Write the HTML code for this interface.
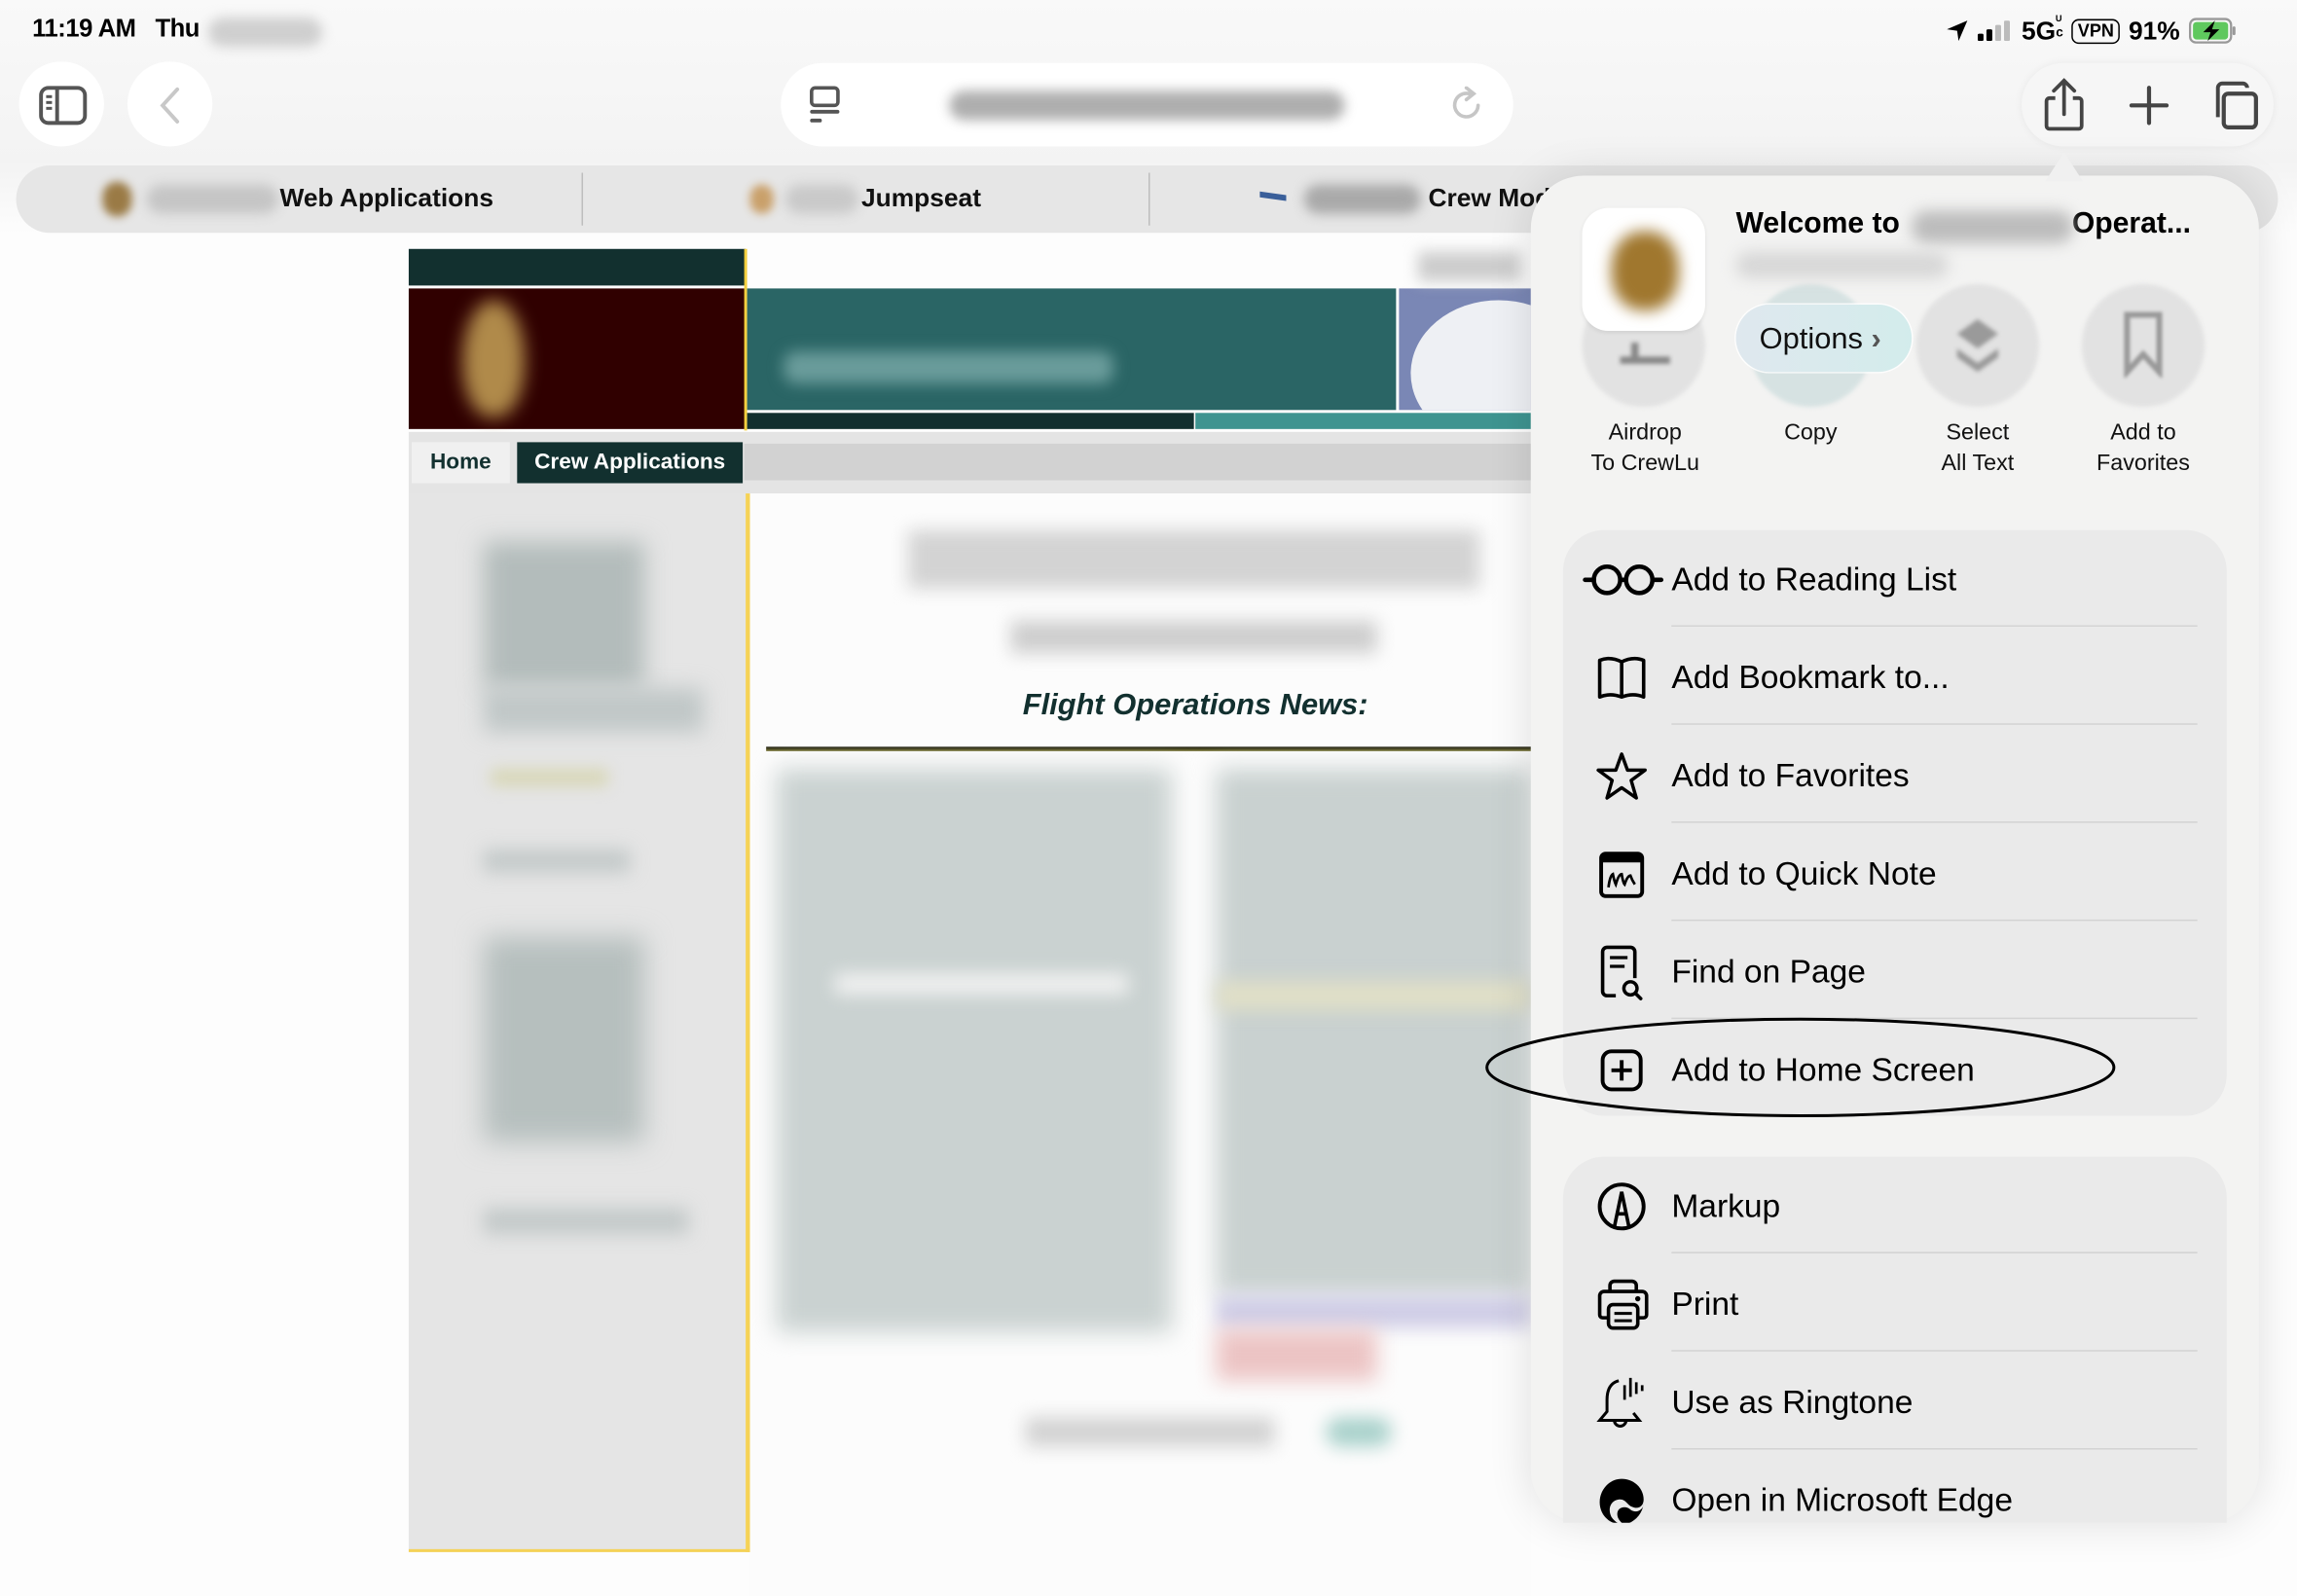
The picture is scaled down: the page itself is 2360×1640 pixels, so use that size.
<!DOCTYPE html>
<html><head><meta charset="utf-8"><style>
html,body{margin:0;padding:0;width:2360px;height:1640px;overflow:hidden;background:#fafafa}
#w{position:absolute;left:0;top:0;width:1568px;height:1090px;transform:scale(1.50510,1.50459);transform-origin:0 0;font-family:"Liberation Sans",sans-serif;color:#000;background:linear-gradient(#f9f9f9,#f3f3f3 110px,#fdfdfd 160px)}
.a{position:absolute}
.bl{filter:blur(6px)}
.row{position:absolute;left:0;right:0;height:67px}
.row .t{position:absolute;left:74px;top:50%;transform:translateY(-50%);font-size:22.3px;white-space:nowrap}
.row svg{position:absolute;left:22px;top:50%;transform:translateY(-50%)}
.sep{position:absolute;left:74px;right:20px;height:1px;background:#d3d3d3}
.circ{position:absolute;width:84px;height:84px;border-radius:50%;background:#e2e2e2;filter:blur(1.5px)}
.lbl{position:absolute;width:120px;text-align:center;font-size:15.5px;line-height:21px;color:#111}
</style></head><body><div id="w">
<div class="a" style="left:22px;top:10px;font-size:17px;font-weight:bold;letter-spacing:-0.3px">11:19 AM&nbsp;&nbsp; Thu</div>
<div class="a bl" style="left:142px;top:12px;width:78px;height:20px;background:#cfcfcf;border-radius:10px;filter:blur(4px)"></div>
<div class="a" style="left:1328px;top:10px;font-size:17.5px;font-weight:bold;white-space:nowrap;display:flex;align-items:center;gap:6px">
<svg width="16" height="16" viewBox="0 0 16 16"><path d="M15 1 L1 7 L8 8 L9 15 Z" fill="#000"/></svg>
<svg width="24" height="14" viewBox="0 0 24 14"><rect x="0" y="9" width="4" height="5" rx="1"/><rect x="6" y="6" width="4" height="8" rx="1"/><rect x="12" y="3" width="4" height="11" rx="1" fill="#bbb"/><rect x="18" y="0" width="4" height="14" rx="1" fill="#bbb"/></svg>
<span>5G<span style="font-size:9px;display:inline-block;line-height:8px;vertical-align:2px">ᵁ<br>c</span></span>
<span style="border:1.5px solid #000;border-radius:5px;font-size:12px;padding:0 3px;line-height:15px">VPN</span>
<span>91%</span>
<svg width="34" height="18" viewBox="0 0 34 18"><rect x="1" y="1" width="28" height="16" rx="4" fill="none" stroke="#999" stroke-width="1.5"/><rect x="3" y="3" width="24" height="12" rx="2.5" fill="#5fc85e"/><rect x="30" y="6" width="2" height="6" rx="1" fill="#999"/><path d="M18 2 L10 10 H15 L13 16 L21 8 H16 Z" fill="#000"/></svg>
</div>
<div class="a" style="left:13px;top:42px;width:58px;height:58px;border-radius:50%;background:#fff"></div>
<svg class="a" style="left:26px;top:58px" width="34" height="28" viewBox="0 0 34 28"><rect x="2" y="2" width="30" height="24" rx="5" fill="none" stroke="#555" stroke-width="2.6"/><line x1="13" y1="2" x2="13" y2="26" stroke="#555" stroke-width="2.6"/><g fill="#555"><rect x="5.5" y="7" width="4" height="2"/><rect x="5.5" y="11" width="4" height="2"/><rect x="5.5" y="15" width="4" height="2"/></g></svg>
<div class="a" style="left:87px;top:42px;width:58px;height:58px;border-radius:50%;background:#fff"></div>
<svg class="a" style="left:106px;top:58px" width="20" height="28" viewBox="0 0 20 28"><path d="M15 3 L5 14 L15 25" fill="none" stroke="#c8c8c8" stroke-width="2.6" stroke-linecap="round"/></svg>
<div class="a" style="left:533px;top:43px;width:500px;height:57px;border-radius:29px;background:#fff"></div>
<svg class="a" style="left:551px;top:58px" width="26" height="28" viewBox="0 0 26 28"><rect x="3" y="2" width="18" height="12" rx="2.5" fill="none" stroke="#555" stroke-width="2.4"/><rect x="2" y="17" width="20" height="2.6" rx="1.3" fill="#555"/><rect x="2" y="23" width="8" height="2.6" rx="1.3" fill="#555"/></svg>
<div class="a bl" style="left:648px;top:62px;width:270px;height:20px;background:#9a9a9a;border-radius:10px;filter:blur(4px);opacity:.8"></div>
<svg class="a" style="left:989px;top:59px" width="26" height="26" viewBox="0 0 26 26"><path d="M20 13 A8 8 0 1 1 14 5" fill="none" stroke="#c6c6c6" stroke-width="2.4" stroke-linecap="round"/><path d="M12 1 L17 5 L12 9" fill="none" stroke="#c6c6c6" stroke-width="2.4" stroke-linecap="round"/></svg>
<div class="a" style="left:1380px;top:43px;width:172px;height:57px;border-radius:29px;background:#f6f6f6;box-shadow:0 0 6px rgba(0,0,0,.06)"></div>
<svg class="a" style="left:1392px;top:52px" width="34" height="40" viewBox="0 0 34 40"><path d="M11 15 H7 a2 2 0 0 0 -2 2 V34 a2 2 0 0 0 2 2 H27 a2 2 0 0 0 2 -2 V17 a2 2 0 0 0 -2 -2 H23" fill="none" stroke="#444" stroke-width="2.5"/><path d="M17 26 V3 M10 10 L17 3 L24 10" fill="none" stroke="#444" stroke-width="2.5" stroke-linecap="round"/></svg>
<svg class="a" style="left:1453px;top:58px" width="28" height="28" viewBox="0 0 28 28"><path d="M14 2 V26 M2 14 H26" stroke="#444" stroke-width="2.8" stroke-linecap="round"/></svg>
<svg class="a" style="left:1508px;top:54px" width="36" height="36" viewBox="0 0 36 36"><path d="M6 26 V6 a3 3 0 0 1 3 -3 H23 a3 3 0 0 1 3 3" fill="none" stroke="#444" stroke-width="2.6"/><rect x="10" y="10" width="22" height="23" rx="3" fill="none" stroke="#444" stroke-width="2.8"/></svg>
<div class="a" style="left:11px;top:113px;width:1544px;height:46px;border-radius:23px;background:#e6e6e6"></div>
<div class="a" style="left:397px;top:118px;width:1px;height:36px;background:#bdbdbd"></div>
<div class="a" style="left:784px;top:118px;width:1px;height:36px;background:#bdbdbd"></div>
<div class="a" style="left:70px;top:124px;width:20px;height:24px;border-radius:10px;background:#9a7a45;filter:blur(3px)"></div>
<div class="a" style="left:100px;top:126px;width:90px;height:20px;border-radius:10px;background:#c5c5c5;filter:blur(4px)"></div>
<div class="a" style="left:191px;top:125px;font-size:17.5px;font-weight:bold;color:#111">Web Applications</div>
<div class="a" style="left:512px;top:126px;width:16px;height:20px;border-radius:8px;background:#c9a06a;filter:blur(3px)"></div>
<div class="a" style="left:536px;top:126px;width:50px;height:20px;border-radius:10px;background:#c9c9c9;filter:blur(4px)"></div>
<div class="a" style="left:588px;top:125px;font-size:17.5px;font-weight:bold;color:#111">Jumpseat</div>
<div class="a" style="left:860px;top:132px;width:18px;height:4px;background:#3a5f9a;transform:skewY(8deg)"></div>
<div class="a" style="left:890px;top:126px;width:80px;height:20px;border-radius:10px;background:#a9a9a9;filter:blur(4px)"></div>
<div class="a" style="left:975px;top:125px;font-size:17.5px;font-weight:bold;color:#111;width:86px;overflow:hidden;white-space:nowrap">Crew Mode</div>
<div class="a" style="left:279px;top:170px;width:230px;height:25px;background:#12302f"></div>
<div class="a" style="left:279px;top:197px;width:230px;height:96px;background:#300000"></div>
<div class="a" style="left:316px;top:205px;width:42px;height:80px;border-radius:50% 50% 45% 45%;background:#b08a4a;filter:blur(6px)"></div>
<div class="a" style="left:508px;top:170px;width:2px;height:124px;background:#f3cf3e"></div>
<div class="a" style="left:510px;top:197px;width:443px;height:83px;background:#2a6565"></div>
<div class="a" style="left:535px;top:240px;width:225px;height:22px;background:#6a9c9b;filter:blur(5px);border-radius:8px"></div>
<div class="a" style="left:955px;top:197px;width:90px;height:83px;background:#7a87b5;overflow:hidden"><div style="position:absolute;left:8px;top:8px;width:120px;height:100px;border-radius:50%;background:#eef0f4"></div></div>
<div class="a" style="left:510px;top:282px;width:305px;height:11px;background:#12302f"></div>
<div class="a" style="left:816px;top:282px;width:229px;height:11px;background:#3e9490"></div>
<div class="a" style="left:968px;top:172px;width:70px;height:20px;background:#ccc;filter:blur(5px)"></div>
<div class="a" style="left:279px;top:295px;width:766px;height:42px;background:#e4e4e4"></div>
<div class="a" style="left:508px;top:303px;width:537px;height:25px;background:#d2d2d2"></div>
<div class="a" style="left:281px;top:302px;width:67px;height:28px;background:#f0f0f0;font:bold 15px 'Liberation Sans Narrow','Liberation Sans',sans-serif;color:#12302f;text-align:center;line-height:28px">Home</div>
<div class="a" style="left:353px;top:302px;width:154px;height:28px;background:#12302f;color:#fff;font:bold 15px 'Liberation Sans Narrow','Liberation Sans',sans-serif;text-align:center;line-height:28px">Crew Applications</div>
<div class="a" style="left:279px;top:337px;width:230px;height:723px;background:#e5e5e5"></div>
<div class="a" style="left:509px;top:337px;width:3px;height:723px;background:#f5d257"></div>
<div class="a" style="left:279px;top:1058px;width:233px;height:2px;background:#f5d257"></div>
<div class="a" style="left:512px;top:337px;width:533px;height:753px;background:#fcfcfc"></div>
<div class="a" style="left:330px;top:370px;width:110px;height:100px;background:#b3bcbb;filter:blur(8px)"></div>
<div class="a" style="left:330px;top:470px;width:150px;height:30px;background:#c0c7c7;filter:blur(7px)"></div>
<div class="a" style="left:335px;top:525px;width:80px;height:12px;background:#d8d7b8;filter:blur(5px)"></div>
<div class="a" style="left:330px;top:580px;width:100px;height:16px;background:#c3c9c9;filter:blur(6px)"></div>
<div class="a" style="left:330px;top:640px;width:110px;height:140px;background:#b6bfbe;filter:blur(9px)"></div>
<div class="a" style="left:330px;top:825px;width:140px;height:18px;background:#c3c9c9;filter:blur(6px)"></div>
<div class="a" style="left:620px;top:362px;width:390px;height:40px;background:#d3d3d3;filter:blur(6px)"></div>
<div class="a" style="left:690px;top:424px;width:250px;height:22px;background:#cdcdcd;filter:blur(6px)"></div>
<div class="a" style="left:523px;top:470px;width:586px;text-align:center;font-size:20.5px;font-weight:bold;font-style:italic;color:#12302f">Flight Operations News:</div>
<div class="a" style="left:523px;top:510px;width:522px;height:3px;background:linear-gradient(#1a1a0e,#7d7a3a)"></div>
<div class="a" style="left:530px;top:525px;width:270px;height:385px;background:#cad2d1;filter:blur(8px)"></div>
<div class="a" style="left:570px;top:665px;width:200px;height:14px;background:#f2f2f2;filter:blur(6px)"></div>
<div class="a" style="left:830px;top:525px;width:215px;height:360px;background:#c9d1d0;filter:blur(8px)"></div>
<div class="a" style="left:830px;top:670px;width:215px;height:20px;background:#e0dfc7;filter:blur(6px)"></div>
<div class="a" style="left:830px;top:885px;width:215px;height:22px;background:#cfcde6;filter:blur(6px)"></div>
<div class="a" style="left:830px;top:908px;width:110px;height:35px;background:#ecc4c4;filter:blur(7px)"></div>
<div class="a" style="left:700px;top:968px;width:170px;height:20px;background:#d2d2d2;filter:blur(6px)"></div>
<div class="a" style="left:905px;top:968px;width:45px;height:20px;background:#a9d1cb;filter:blur(6px);border-radius:10px"></div>
<!-- share sheet -->
<div class="a" style="left:1045px;top:120px;width:497px;height:920px;border-radius:36px;background:#f3f3f2;box-shadow:0 0 30px rgba(0,0,0,.12)"></div>
<div class="a" style="left:1396px;top:104px;width:26px;height:20px;background:#f0f0f0;clip-path:polygon(50% 0,100% 100%,0 100%)"></div>
<div class="circ" style="left:1080px;top:194px"></div>
<div class="circ" style="left:1194px;top:194px;background:#d6e2e2"></div>
<div class="circ" style="left:1308px;top:194px"></div>
<div class="circ" style="left:1421px;top:194px"></div>
<svg class="a" style="left:1333px;top:216px;filter:blur(1.5px)" width="34" height="42" viewBox="0 0 34 42"><path d="M17 2 L31 12 L17 22 L3 12 Z" fill="#9a9a9a"/><path d="M3 22 L17 32 L31 22 L31 28 L17 38 L3 28 Z" fill="#9a9a9a"/></svg>
<svg class="a" style="left:1448px;top:212px;filter:blur(1px)" width="30" height="46" viewBox="0 0 30 46"><path d="M4 3 H26 V42 L15 30 L4 42 Z" fill="none" stroke="#999" stroke-width="4"/></svg>
<svg class="a" style="left:1102px;top:230px;filter:blur(1.5px)" width="42" height="20" viewBox="0 0 42 20"><path d="M4 16 H38 M14 4 L14 14" stroke="#888" stroke-width="5"/></svg>
<div class="a" style="left:1080px;top:142px;width:84px;height:84px;border-radius:18px;background:#fff;box-shadow:0 1px 3px rgba(0,0,0,.08)"></div>
<div class="a" style="left:1100px;top:158px;width:46px;height:54px;border-radius:45%;background:#a0772e;filter:blur(5px)"></div>
<div class="a" style="left:1185px;top:142px;font-size:20px;font-weight:bold;white-space:nowrap">Welcome to <span style="display:inline-block;width:112px"></span>Operat...</div>
<div class="a" style="left:1305px;top:144px;width:110px;height:22px;border-radius:10px;background:#bcbcbc;filter:blur(5px)"></div>
<div class="a" style="left:1185px;top:172px;width:145px;height:18px;border-radius:9px;background:#d7d7d7;filter:blur(5px)"></div>
<div class="a" style="left:1185px;top:208px;width:120px;height:46px;border-radius:23px;background:linear-gradient(90deg,#dfe8ee,#d3ecec);box-shadow:0 0 0 1px rgba(255,255,255,.8)"></div>
<div class="a" style="left:1201px;top:220px;font-size:20.5px;color:#111">Options <span style="color:#555;font-weight:bold">›</span></div>
<div class="lbl" style="left:1063px;top:285px">Airdrop<br>To CrewLu</div>
<div class="lbl" style="left:1176px;top:285px">Copy</div>
<div class="lbl" style="left:1290px;top:285px">Select<br>All Text</div>
<div class="lbl" style="left:1403px;top:285px">Add to<br>Favorites</div>
<div class="a" style="left:1067px;top:362px;width:453px;height:400px;border-radius:28px;background:#eaeaea">
 <div class="row" style="top:0"><svg width="58" height="30" viewBox="0 0 58 30" style="left:12px"><circle cx="18" cy="15" r="9" fill="none" stroke="#000" stroke-width="3"/><circle cx="40" cy="15" r="9" fill="none" stroke="#000" stroke-width="3"/><path d="M3 15 H9 M27 15 H31 M49 15 H55" stroke="#000" stroke-width="3" stroke-linecap="round"/></svg><div class="t">Add to Reading List</div></div>
 <div class="sep" style="top:65px"></div>
 <div class="row" style="top:67px"><svg width="36" height="34" viewBox="0 0 36 34"><path d="M3 5 Q10 2 18 6 Q26 2 33 5 V30 Q26 27 18 30 Q10 27 3 30 Z M18 6 V30" fill="none" stroke="#000" stroke-width="2.4" stroke-linejoin="round"/></svg><div class="t">Add Bookmark to...</div></div>
 <div class="sep" style="top:132px"></div>
 <div class="row" style="top:134px"><svg width="36" height="36" viewBox="0 0 36 36"><path d="M18 3 L22 14 L34 14 L24.5 21 L28 33 L18 26 L8 33 L11.5 21 L2 14 L14 14 Z" fill="none" stroke="#000" stroke-width="2.3" stroke-linejoin="round"/></svg><div class="t">Add to Favorites</div></div>
 <div class="sep" style="top:199px"></div>
 <div class="row" style="top:201px"><svg width="36" height="36" viewBox="0 0 36 36"><rect x="4" y="4" width="28" height="29" rx="3" fill="none" stroke="#000" stroke-width="2.6"/><rect x="4" y="4" width="28" height="6" fill="#000"/><path d="M9 27 Q10 19 12 18 Q13 23 14 25 Q16 18 18 18 Q19 24 20 25 Q22 19 24 19 Q25 22 27 25" fill="none" stroke="#000" stroke-width="1.8"/></svg><div class="t">Add to Quick Note</div></div>
 <div class="sep" style="top:266px"></div>
 <div class="row" style="top:268px"><svg width="36" height="40" viewBox="0 0 36 40"><path d="M14 36 H8 a3 3 0 0 1 -3 -3 V6 a3 3 0 0 1 3 -3 H24 a3 3 0 0 1 3 3 V24" fill="none" stroke="#000" stroke-width="2.4"/><path d="M10 10 H22 M10 16 H20" stroke="#000" stroke-width="2.2"/><circle cx="24" cy="31" r="4.5" fill="none" stroke="#000" stroke-width="2.3"/><path d="M27.5 34.5 L31 38" stroke="#000" stroke-width="2.4" stroke-linecap="round"/></svg><div class="t">Find on Page</div></div>
 <div class="sep" style="top:333px"></div>
 <div class="row" style="top:335px"><svg width="36" height="36" viewBox="0 0 36 36"><rect x="5" y="5" width="26" height="26" rx="6" fill="none" stroke="#000" stroke-width="2.6"/><path d="M18 11 V25 M11 18 H25" stroke="#000" stroke-width="2.6"/></svg><div class="t">Add to Home Screen</div></div>
</div>
<div class="a" style="left:1067px;top:790px;width:453px;height:250px;border-radius:28px 28px 0 0;background:#eaeaea;overflow:hidden">
 <div class="row" style="top:0"><svg width="36" height="36" viewBox="0 0 36 36"><circle cx="18" cy="18" r="15" fill="none" stroke="#000" stroke-width="2.6"/><path d="M13 32 L18 8 L23 32 M15 23 H21" fill="none" stroke="#000" stroke-width="2.4"/></svg><div class="t">Markup</div></div>
 <div class="sep" style="top:65px"></div>
 <div class="row" style="top:67px"><svg width="38" height="38" viewBox="0 0 38 38"><path d="M10 10 V6 a3 3 0 0 1 3 -3 H25 a3 3 0 0 1 3 3 V10" fill="none" stroke="#000" stroke-width="2.4"/><path d="M9 28 H5 a2 2 0 0 1 -2 -2 V13 a3 3 0 0 1 3 -3 H32 a3 3 0 0 1 3 3 V26 a2 2 0 0 1 -2 2 H29" fill="none" stroke="#000" stroke-width="2.4"/><rect x="9" y="19" width="20" height="16" rx="3" fill="none" stroke="#000" stroke-width="2.4"/><path d="M13 25 H25 M13 30 H25" stroke="#000" stroke-width="2"/><circle cx="29" cy="15" r="1.8"/></svg><div class="t">Print</div></div>
 <div class="sep" style="top:132px"></div>
 <div class="row" style="top:134px"><svg width="36" height="40" viewBox="0 0 36 40"><path d="M16 5 Q8 7 8 18 V26 L3 32 H30 L26 27 M13 32 a4 4 0 0 0 8 0" fill="none" stroke="#000" stroke-width="2"/><path d="M20 8 V18 M24 3 V16 M28 6 V14 M32 8 V12" stroke="#000" stroke-width="1.8"/></svg><div class="t">Use as Ringtone</div></div>
 <div class="sep" style="top:199px"></div>
 <div class="row" style="top:201px"><svg width="36" height="36" viewBox="0 0 36 36"><path d="M18 3 C27 3 33 10 33 17 C33 22 29 24 25 22 C22 21 21 17 17 17 C11 17 8 23 11 29 C13 32 16 34 18 34 C9 34 3 27 3 19 C3 10 10 3 18 3 Z" fill="#000"/><path d="M15 27 C15 22 21 21 24 24 C28 27 33 24 33 20 C32 28 25 34 19 34 C17 32 15 30 15 27 Z" fill="#000"/></svg><div class="t">Open in Microsoft Edge</div></div>
</div>
<svg class="a" style="left:1010px;top:690px" width="440" height="80" viewBox="0 0 440 80"><ellipse cx="219" cy="39" rx="214" ry="33" fill="none" stroke="#000" stroke-width="2"/></svg>
</div></body></html>
